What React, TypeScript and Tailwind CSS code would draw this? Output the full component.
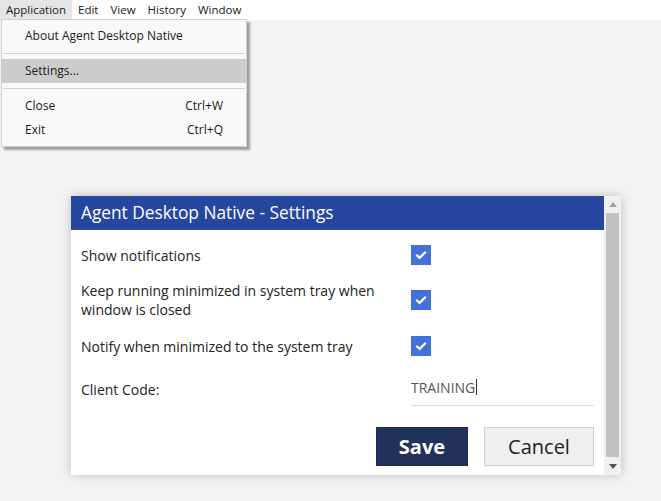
const menus = ["Application", "Edit", "View", "History", "Window"];

function Check() {
  return (
    <div className="flex h-[20px] w-[20px] items-center justify-center bg-[#4271db]">
      <svg viewBox="0 0 20 20" className="h-[20px] w-[20px]">
        <path d="M6 10.5l2.6 2.4L14 7.5" fill="none" stroke="white" strokeWidth="2.2" strokeLinecap="square" />
      </svg>
    </div>
  );
}

function MenuItem({ label, shortcut, active }: { label: string; shortcut?: string; active?: boolean }) {
  return (
    <div className={`flex h-[24px] items-center justify-between pl-[23px] pr-[23px] ${active ? "bg-[#cccccc]" : ""}`}>
      <span>{label}</span>
      {shortcut && <span>{shortcut}</span>}
    </div>
  );
}

function Row({ label, h, mt, children }: { label: React.ReactNode; h: string; mt: string; children: React.ReactNode }) {
  return (
    <div className={`flex items-center ${h} ${mt}`}>
      <div className="w-[330px] text-[14px] leading-[19px] text-[#222]">{label}</div>
      <div className="flex-1">{children}</div>
    </div>
  );
}

export default function App() {
  return (
    <div className="relative h-[501px] w-[661px] overflow-hidden bg-[#f3f3f3] font-['Open_Sans',sans-serif]">
      {/* menu bar */}
      <div className="flex h-[20px] items-center bg-white text-[11.5px] text-[#1a1a1a]">
        {menus.map((m, i) => (
          <div key={m} className={`flex h-[20px] items-center px-[6px] ${i === 0 ? "bg-[#e5e5e5]" : ""}`}>
            {m}
          </div>
        ))}
      </div>

      {/* dropdown */}
      <div className="absolute left-[1px] top-[19px] w-[246px] border border-[#cfcfcf] bg-[#f9f9f9] py-[4px] text-[12px] text-[#1a1a1a] shadow-[3px_3px_2px_rgba(0,0,0,0.35)]">
        <MenuItem label="About Agent Desktop Native" />
        <div className="mx-[1px] my-[5px] h-px bg-[#d4d4d4]" />
        <MenuItem label="Settings..." active />
        <div className="mx-[1px] my-[5px] h-px bg-[#d4d4d4]" />
        <MenuItem label="Close" shortcut="Ctrl+W" />
        <MenuItem label="Exit" shortcut="Ctrl+Q" />
      </div>

      {/* settings dialog */}
      <div className="absolute left-[71px] top-[196px] flex h-[279px] w-[550px] bg-white shadow-[0_0_10px_rgba(0,0,0,0.22)]">
        <div className="flex w-[533px] flex-col">
          <div className="flex h-[34px] items-center bg-[#2746a0] px-[10px] text-[17.3px] text-white">
            Agent Desktop Native - Settings
          </div>
          <div className="flex flex-col pl-[10px] pr-[10px]">
            <Row label="Show notifications" h="h-[20px]" mt="mt-[15px]">
              <Check />
            </Row>
            <Row
              label={
                <>
                  Keep running minimized in system tray when
                  <br />
                  window is closed
                </>
              }
              h="h-[38px]"
              mt="mt-[16px]"
            >
              <Check />
            </Row>
            <Row label="Notify when minimized to the system tray" h="h-[20px]" mt="mt-[17px]">
              <Check />
            </Row>
            <Row label="Client Code:" h="h-[34px]" mt="mt-[16px]">
              <div className="flex h-[34px] items-center border-b border-[#dddddd] pb-[3px] text-[14px] text-[#555]">
                TRAINING<span className="ml-px inline-block h-[16px] w-px bg-[#333]" />
              </div>
            </Row>
            <div className="mt-[21px] flex justify-end gap-[16px]">
              <button className="h-[39px] w-[92px] border border-[#1b2a4c] bg-[#22325a] text-[20px] font-bold text-white">
                Save
              </button>
              <button className="h-[39px] w-[110px] border border-[#cccccc] bg-[#efefef] text-[20px] text-[#222]">
                Cancel
              </button>
            </div>
          </div>
        </div>
        {/* scrollbar */}
        <div className="flex w-[17px] flex-col items-center bg-[#f0f0f0]">
          <div className="flex h-[17px] items-center justify-center">
            <svg viewBox="0 0 8 5" className="h-[5px] w-[8px]">
              <path d="M0 5L4 0L8 5Z" fill="#a3a3a3" />
            </svg>
          </div>
          <div className="h-[244px] w-[13px] bg-[#c1c1c1]" />
          <div className="flex h-[18px] items-center justify-center">
            <svg viewBox="0 0 8 5" className="h-[5px] w-[8px]">
              <path d="M0 0L8 0L4 5Z" fill="#505060" />
            </svg>
          </div>
        </div>
      </div>
    </div>
  );
}
